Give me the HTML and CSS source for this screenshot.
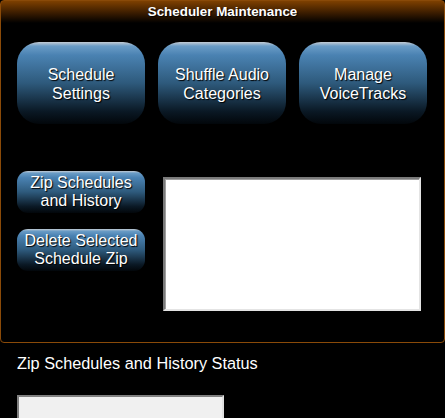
FILE: index.html
```html
<!DOCTYPE html>
<html>
<head>
<meta charset="utf-8">
<link rel="stylesheet" href="styles.css">
</head>
<body>
<div class="panel">
  <div class="panel-title">Scheduler Maintenance</div>
  <div class="top-row">
    <button class="btn big">Schedule<br>Settings</button>
    <button class="btn big">Shuffle Audio<br>Categories</button>
    <button class="btn big">Manage<br>VoiceTracks</button>
  </div>
  <div class="mid-row">
    <div class="small-col">
      <button class="btn small">Zip Schedules<br>and History</button>
      <button class="btn small">Delete Selected<br>Schedule Zip</button>
    </div>
    <div class="listbox"></div>
  </div>
</div>
<div class="status-label">Zip Schedules and History Status</div>
<div class="status-box"></div>
</body>
</html>
```
FILE: styles.css
```css
html, body {
  margin: 0;
  padding: 0;
  background: #000;
  font-family: "Liberation Sans", Arial, sans-serif;
  color: #fff;
  overflow: hidden;
}
.panel {
  width: 443px;
  height: 341px;
  border: 1px solid #8a4a08;
  border-radius: 4px;
  background: linear-gradient(to bottom, #7e4000 0px, #3a1c00 12px, #000 22px, #000 100%);
}
.panel-title {
  height: 22px;
  text-align: center;
  font-weight: bold;
  font-size: 13.4px;
  line-height: 22px;
  text-shadow: 1px 1px 1px #000;
}
.top-row {
  display: flex;
  gap: 13px;
  padding: 19px 0 0 16px;
}
.btn {
  border: none;
  color: #fff;
  font-family: "Liberation Sans", Arial, sans-serif;
  text-shadow: 1px 1px 1px #000;
  background: linear-gradient(to bottom, #c4ccd4 0%, #6a9cc6 5%, #4a82b2 16%, #2e5a7c 50%, #0a1824 85%, #02060a 100%);
  padding: 0;
  cursor: pointer;
}
.big {
  width: 128px;
  height: 82px;
  border-radius: 22px;
  font-size: 16px;
  line-height: 19px;
  padding-top: 2px;
}
.mid-row {
  display: flex;
  padding: 47px 0 0 16px;
}
.small-col {
  display: flex;
  flex-direction: column;
  gap: 16px;
}
.small {
  width: 128px;
  height: 42px;
  border-radius: 11px;
  font-size: 16px;
  line-height: 18px;
}
.listbox {
  margin: 6px 0 0 18px;
  width: 254px;
  height: 130px;
  background: #fff;
  border: 2px solid;
  border-color: #7a7a7a #e4e4e4 #e4e4e4 #7a7a7a;
  box-shadow: inset 1px 1px 0 #a0a0a0;
}
.status-label {
  margin: 10px 0 0 17px;
  font-size: 16.3px;
  line-height: 20px;
}
.status-box {
  margin: 22px 0 0 17px;
  width: 203px;
  height: 24px;
  background: #f0f0f0;
  border: 2px solid;
  border-color: #808080 #e0e0e0 #e0e0e0 #808080;
}
```
